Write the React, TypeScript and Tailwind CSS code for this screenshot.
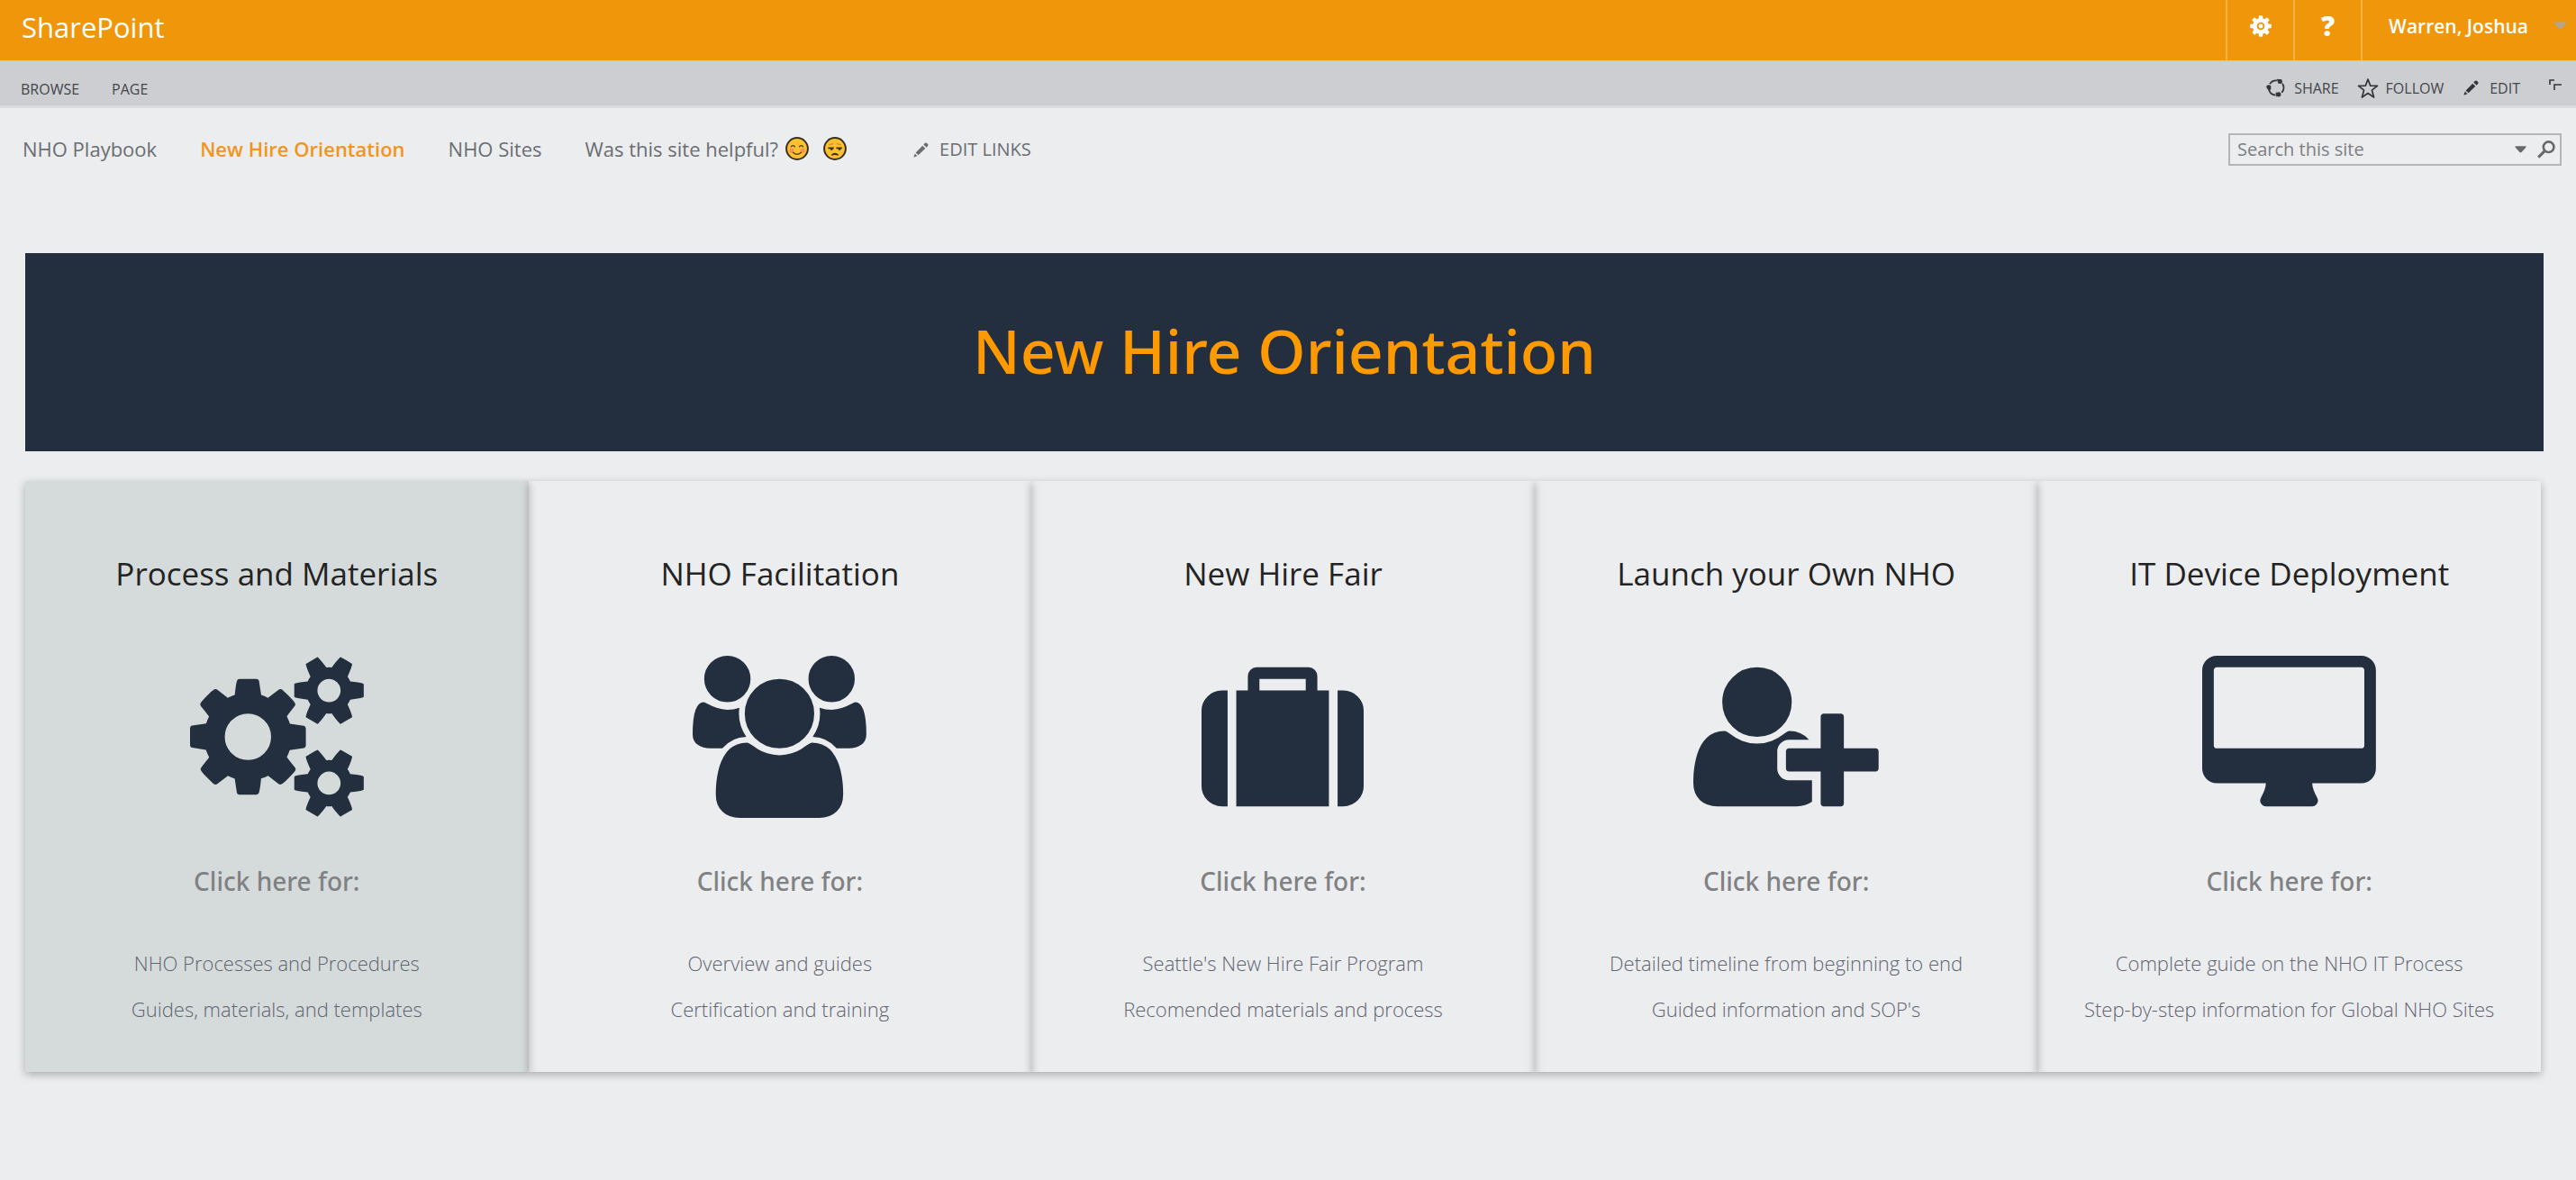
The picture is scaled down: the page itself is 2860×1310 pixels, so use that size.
import React from "react";

type IconProps = { className?: string };

function GearIcon({ className }: IconProps) {
  return (
    <svg viewBox="0 0 24 24" className={className} aria-hidden="true">
      <g fill="currentColor">
        <circle cx="12" cy="12" r="9" />
        {[0, 45, 90, 135, 180, 225, 270, 315].map((a) => (
          <rect key={a} x="9.8" y="0.2" width="4.4" height="6" rx="1" transform={`rotate(${a} 12 12)`} />
        ))}
      </g>
      <circle cx="12" cy="12" r="3.4" fill="none" stroke="#f0960a" strokeWidth="1.9" />
    </svg>
  );
}

function PencilIcon({ className }: IconProps) {
  return (
    <svg viewBox="0 0 20 20" className={className} fill="currentColor" aria-hidden="true">
      <path d="M0.4 19.6 2.1 14.8 5.2 17.9Z" />
      <path d="M3.1 13.4 12 4.3 15.7 8 6.6 16.9Z" />
      <path d="M13.3 2.8 15.2 1Q16.4 0 17.6 1L19 2.4Q20 3.6 19 4.8L17.2 6.7Z" />
    </svg>
  );
}

function ShareIcon({ className }: IconProps) {
  return (
    <svg viewBox="0 0 24 24" className={className} aria-hidden="true">
      <g fill="none" stroke="currentColor" strokeWidth="2">
        <path d="M4.6 7.2A9.4 9.4 0 0 1 13.6 2.7" />
        <path d="M20.6 6.6A9.6 9.6 0 0 1 19.6 18.2" />
        <path d="M3.6 14.6A9.6 9.6 0 0 0 12 21.4" />
      </g>
      <g fill="currentColor">
        <path d="M13.4.8 19.4 1.4 20.2 6.2 15.6 6.6Z" />
        <circle cx="17.6" cy="3.9" r="2.8" />
        <circle cx="3.2" cy="11" r="2.8" />
        <path d="M.4 9.4H6V14L3 15.6Z" />
        <circle cx="16" cy="20.6" r="2.8" />
        <path d="M12 18 17.2 17.8 18.8 21 13 23.4Z" />
      </g>
    </svg>
  );
}

function StarIcon({ className }: IconProps) {
  return (
    <svg viewBox="0 0 24 24" className={className} aria-hidden="true">
      <path
        d="M12 2 14.7 9.1 22.5 9.4 16.4 14.1 18.6 22 12 17.5 5.4 22 7.6 14.1 1.5 9.4 9.3 9.1Z"
        fill="none"
        stroke="currentColor"
        strokeWidth="1.7"
        strokeLinejoin="round"
      />
    </svg>
  );
}

function FocusIcon({ className }: IconProps) {
  return (
    <svg viewBox="0 0 14 13" className={className} fill="none" stroke="currentColor" strokeWidth="1.6" aria-hidden="true">
      <path d="M1 6V1H6" />
      <path d="M6 12V6H14" />
    </svg>
  );
}

function CaretIcon({ className }: IconProps) {
  return (
    <svg viewBox="0 0 14 8" className={className} fill="currentColor" aria-hidden="true">
      <path d="M1.2.4H12.8Q14.2.5 13.2 1.8L8.4 7.2Q7 8.4 5.6 7.2L.8 1.8Q-.2.5 1.2.4Z" />
    </svg>
  );
}

function SearchIcon({ className }: IconProps) {
  return (
    <svg viewBox="0 0 20 20" className={className} fill="none" stroke="currentColor" aria-hidden="true">
      <circle cx="12.6" cy="7.2" r="5.8" strokeWidth="2.6" />
      <path d="M8.2 11.6 1.2 18.6" strokeWidth="3" />
    </svg>
  );
}

function HappyFace() {
  return (
    <svg viewBox="0 0 26 26" className="size-[26px]" aria-hidden="true">
      <circle cx="13" cy="13" r="11.9" fill="#fdc02f" stroke="#3a3020" strokeWidth="2" />
      <circle cx="6.8" cy="15.2" r="2.6" fill="#f9905a" />
      <circle cx="19.2" cy="15.2" r="2.6" fill="#f9905a" />
      <g fill="none" stroke="#5a4315" strokeWidth="1.4" strokeLinecap="round">
        <path d="M6.4 10.8Q8.4 8.4 10.4 10.8" />
        <path d="M15.6 10.8Q17.6 8.4 19.6 10.8" />
        <path d="M8.6 17.2Q13 21.4 17.4 17.2" />
      </g>
    </svg>
  );
}

function UnhappyFace() {
  return (
    <svg viewBox="0 0 26 26" className="size-[26px]" aria-hidden="true">
      <circle cx="13" cy="13" r="11.9" fill="#fdc02f" stroke="#3a3020" strokeWidth="2" />
      <g fill="none" stroke="#d48d1c" strokeWidth="1.2" strokeLinecap="round">
        <path d="M6.6 8.6 10.8 7.6" />
        <path d="M15.2 7.6 19.4 8.6" />
      </g>
      <g fill="#3a3020">
        <path d="M5.4 11.6H11.8V13.2H10.8Q10.6 15 9.2 15 7.8 15 7.8 13.2H5.4Z" />
        <path d="M14.4 11.6H20.8V13.2H19.6Q19.4 15 18 15 16.6 15 16.6 13.2H14.4Z" />
        <path d="M8.8 19.8Q13 15.8 17.2 19.8L16.4 20.8Q13 19.4 9.6 20.8Z" />
      </g>
    </svg>
  );
}

function CogsIcon() {
  return (
    <svg viewBox="0 0 1920 1792" className="h-45" fill="currentColor" aria-hidden="true">
      <path d="M896 896q0-106-75-181t-181-75-181 75-75 181 75 181 181 75 181-75 75-181zm768 512q0-52-38-90t-90-38-90 38-38 90q0 53 37.5 90.5t90.5 37.5 90.5-37.5 37.5-90.5zm0-1024q0-52-38-90t-90-38-90 38-38 90q0 53 37.5 90.5t90.5 37.5 90.5-37.5 37.5-90.5zm-384 421v185q0 10-7 19.5t-16 10.5l-155 24q-11 35-32 76 34 48 90 115 7 11 7 20 0 12-7 19-23 30-82.5 89.5t-78.5 59.5q-11 0-21-7l-115-90q-37 19-77 31-11 108-23 155-7 24-30 24h-186q-11 0-20-7.5t-10-17.5l-23-153q-34-10-75-31l-118 89q-7 7-20 7-11 0-21-8-144-133-144-160 0-9 7-19 10-14 41-53t47-61q-23-44-35-82l-152-24q-10-1-17-9.5t-7-19.5v-185q0-10 7-19.5t16-10.5l155-24q11-35 32-76-34-48-90-115-7-11-7-20 0-12 7-20 22-30 82-89t79-59q11 0 21 7l115 90q34-18 77-32 11-108 23-154 7-24 30-24h186q11 0 20 7.5t10 17.5l23 153q34 10 75 31l118-89q8-7 20-7 11 0 21 8 144 133 144 160 0 8-7 19-12 16-42 54t-45 60q23 48 34 82l152 23q10 2 17 10.5t7 19.5zm640 533v140q0 16-149 31-12 27-30 52 51 113 51 138 0 4-4 7-122 71-124 71-8 0-46-47t-52-68q-20 2-30 2t-30-2q-14 21-52 68t-46 47q-2 0-124-71-4-3-4-7 0-25 51-138-18-25-30-52-149-15-149-31v-140q0-16 149-31 13-29 30-52-51-113-51-138 0-4 4-7 4-2 35-20t59-34 30-16q8 0 46 46.5t52 67.5q20-2 30-2t30 2q51-71 92-112l6-2q4 0 124 70 4 3 4 7 0 25-51 138 17 23 30 52 149 15 149 31zm0-1024v140q0 16-149 31-12 27-30 52 51 113 51 138 0 4-4 7-122 71-124 71-8 0-46-47t-52-68q-20 2-30 2t-30-2q-14 21-52 68t-46 47q-2 0-124-71-4-3-4-7 0-25 51-138-18-25-30-52-149-15-149-31v-140q0-16 149-31 13-29 30-52-51-113-51-138 0-4 4-7 4-2 35-20t59-34 30-16q8 0 46 46.5t52 67.5q20-2 30-2t30 2q51-71 92-112l6-2q4 0 124 70 4 3 4 7 0 25-51 138 17 23 30 52 149 15 149 31z" />
    </svg>
  );
}

function UsersIcon() {
  return (
    <svg viewBox="0 0 1920 1792" className="h-45" fill="currentColor" aria-hidden="true">
      <path d="M593 896q-162 5-265 128h-134q-82 0-138-40.5t-56-118.5q0-353 124-353 6 0 43.5 21t97.5 42.5 119 21.5q67 0 133-23-5 37-5 66 0 139 81 256zm1071 637q0 120-73 189.5t-194 69.5h-874q-121 0-194-69.5t-73-189.5q0-53 3.5-103.5t14-109 26.5-108.5 43-97.5 62-81 85.5-53.5 111.5-20q10 0 43 21.5t73 48 107 48 135 21.5 135-21.5 107-48 73-48 43-21.5q61 0 111.5 20t85.5 53.5 62 81 43 97.5 26.5 108.5 14 109 3.5 103.5zm-1024-1277q0 106-75 181t-181 75-181-75-75-181 75-181 181-75 181 75 75 181zm704 384q0 159-112.5 271.5t-271.5 112.5-271.5-112.5-112.5-271.5 112.5-271.5 271.5-112.5 271.5 112.5 112.5 271.5zm576 225q0 78-56 118.5t-138 40.5h-134q-103-123-265-128 81-117 81-256 0-29-5-66 66 23 133 23 59 0 119-21.5t97.5-42.5 43.5-21q124 0 124 353zm-128-609q0 106-75 181t-181 75-181-75-75-181 75-181 181-75 181 75 75 181z" />
    </svg>
  );
}

function SuitcaseIcon() {
  return (
    <svg viewBox="0 0 1792 1792" className="h-45" fill="currentColor" aria-hidden="true">
      <path d="M640 384h512v-128h-512v128zm-352 0v1280h-64q-92 0-158-66t-66-158v-832q0-92 66-158t158-66h64zm1120 0v1280h-1024v-1280h128v-160q0-40 28-68t68-28h576q40 0 68 28t28 68v160h128zm384 224v832q0 92-66 158t-158 66h-64v-1280h64q92 0 158 66t66 158z" />
    </svg>
  );
}

function UserPlusIcon() {
  return (
    <svg viewBox="0 0 2048 1792" className="h-45" fill="currentColor" aria-hidden="true">
      <path d="M704 896q-159 0-271.5-112.5t-112.5-271.5 112.5-271.5 271.5-112.5 271.5 112.5 112.5 271.5-112.5 271.5-271.5 112.5zm960 128h352q13 0 22.5 9.5t9.5 22.5v192q0 13-9.5 22.5t-22.5 9.5h-352v352q0 13-9.5 22.5t-22.5 9.5h-192q-13 0-22.5-9.5t-9.5-22.5v-352h-352q-13 0-22.5-9.5t-9.5-22.5v-192q0-13 9.5-22.5t22.5-9.5h352v-352q0-13 9.5-22.5t22.5-9.5h192q13 0 22.5 9.5t9.5 22.5v352zm-736 224q0 52 38 90t90 38h256v238q-68 50-171 50h-874q-121 0-194-69t-73-190q0-53 3.5-103.5t14-109 26.5-108.5 43-97.5 62-81 85.5-53.5 111.5-20q19 0 39 17 79 61 154.5 91.5t164.5 30.5 164.5-30.5 154.5-91.5q20-17 39-17 132 0 217 96h-223q-52 0-90 38t-38 90v192z" />
    </svg>
  );
}

function DesktopIcon() {
  return (
    <svg viewBox="-64 0 1920 1792" className="h-45" fill="currentColor" aria-hidden="true">
      <path d="M1728 992v-832q0-13-9.5-22.5t-22.5-9.5h-1600q-13 0-22.5 9.5t-9.5 22.5v832q0 13 9.5 22.5t22.5 9.5h1600q13 0 22.5-9.5t9.5-22.5zm128-832v1088q0 66-47 113t-113 47h-544q0 37 16 77.5t32 71 16 43.5q0 26-19 45t-45 19h-512q-26 0-45-19t-19-45q0-14 16-44t32-70 16-78h-544q-66 0-113-47t-47-113v-1088q0-66 47-113t113-47h1600q66 0 113 47t47 113z" />
    </svg>
  );
}

const cards = [
  { title: "Process and Materials", icon: <CogsIcon />, lines: ["NHO Processes and Procedures", "Guides, materials, and templates"], active: true },
  { title: "NHO Facilitation", icon: <UsersIcon />, lines: ["Overview and guides", "Certification and training"], active: false },
  { title: "New Hire Fair", icon: <SuitcaseIcon />, lines: ["Seattle's New Hire Fair Program", "Recomended materials and process"], active: false },
  { title: "Launch your Own NHO", icon: <UserPlusIcon />, lines: ["Detailed timeline from beginning to end", "Guided information and SOP's"], active: false },
  { title: "IT Device Deployment", icon: <DesktopIcon />, lines: ["Complete guide on the NHO IT Process", "Step-by-step information for Global NHO Sites"], active: false },
];

export default function App() {
  return (
    <div className="min-h-screen bg-[#ecedef] font-['Open_Sans','Noto_Sans',sans-serif]">
      <header>
        <div className="flex h-[67px] items-stretch justify-between bg-[#f0960a] text-white">
          <a href="#" className="flex items-center pb-2 pl-6 text-[31px] leading-9">SharePoint</a>
          <div className="flex items-stretch">
            <button type="button" aria-label="Settings" className="flex w-[75px] items-center justify-center border-l-2 border-[#f6b247] pb-2.5">
              <GearIcon className="size-6" />
            </button>
            <button type="button" aria-label="Help" className="flex w-[75px] items-center justify-center border-l-2 border-[#f6b247] pb-2.5 text-[30px] leading-9 font-extrabold">
              ?
            </button>
            <button type="button" className="flex items-center gap-7 border-l-2 border-[#f6b247] pr-2.5 pb-2.5 pl-[29px] text-[21px] leading-7 font-semibold">
              Warren, Joshua
              <CaretIcon className="w-[15px] text-[#b5a58a]" />
            </button>
          </div>
        </div>

        <div className="flex h-[53px] items-center justify-between border-t border-b-3 border-t-[#d8c9ac] border-b-[#d9dadd] bg-[#cdced2] pt-2.5 pr-4 pl-[23px] text-base leading-6 text-[#444649]">
          <div className="flex gap-9 pt-0.5">
            <button type="button">BROWSE</button>
            <button type="button">PAGE</button>
          </div>
          <div className="flex items-center">
            <button type="button" className="flex items-center gap-2.5">
              <ShareIcon className="size-[21px] text-[#333538]" />SHARE
            </button>
            <button type="button" className="ml-5 flex items-center gap-2">
              <StarIcon className="size-6 text-[#333538]" />FOLLOW
            </button>
            <button type="button" className="ml-[22px] flex items-center gap-3">
              <PencilIcon className="size-[17px] text-[#333538]" />EDIT
            </button>
            <button type="button" aria-label="Focus on content" className="ml-8 pb-1.5">
              <FocusIcon className="w-3.5 text-[#333538]" />
            </button>
          </div>
        </div>

        <div className="flex items-center justify-between pt-7 pr-4 pb-[97px] pl-[25px] text-[22px] leading-[30px] text-[#6a6d72]">
          <nav className="flex items-center pb-0.5">
            <a href="#">NHO Playbook</a>
            <a href="#" aria-current="page" className="ml-12 font-semibold text-[#f2941d]">New Hire Orientation</a>
            <a href="#" className="ml-12">NHO Sites</a>
            <span className="ml-12">Was this site helpful?</span>
            <a href="#" aria-label="Yes, helpful" className="ml-2"><HappyFace /></a>
            <a href="#" aria-label="No, not helpful" className="ml-4"><UnhappyFace /></a>
            <button type="button" className="ml-[74px] flex items-center gap-3 pt-0.5 text-xl">
              <PencilIcon className="size-[17px]" />EDIT LINKS
            </button>
          </nav>
          <form className="flex h-9 w-[370px] items-center border-2 border-[#b4b5b8] pr-[5px] pl-2" onSubmit={(e) => e.preventDefault()}>
            <input type="search" aria-label="Search this site" placeholder="Search this site" className="min-w-0 flex-1 bg-transparent text-xl leading-6 outline-none placeholder:text-[#7c7e82]" />
            <button type="button" aria-label="Search scope" className="mr-3"><CaretIcon className="w-[13px] text-[#66686b]" /></button>
            <button type="submit" aria-label="Search"><SearchIcon className="size-5 text-[#66686b]" /></button>
          </form>
        </div>
      </header>

      <main className="pr-9 pb-16 pl-7">
        <div className="flex h-[220px] items-center justify-center bg-[#232f3e] pb-1">
          <h1 className="font-['Noto_Sans','Open_Sans',sans-serif] text-[68px] leading-[84px] font-medium text-[#ff9900]">New Hire Orientation</h1>
        </div>
        <div className="mt-[33px] mr-[3px] grid grid-cols-5">
          {cards.map((card) => (
            <a
              key={card.title}
              href="#"
              className={
                "flex flex-col items-center pt-20 pb-11 text-center shadow-[0_3px_9px_rgba(0,0,0,0.28)] " +
                (card.active ? "bg-[#d5dbdb]" : "")
              }
            >
              <h2 className="text-[35px] leading-[46px] text-[#232323]">{card.title}</h2>
              <div className="mt-[68px] text-[#232f3e]">{card.icon}</div>
              <p className="mt-[52px] font-['Noto_Sans','Open_Sans',sans-serif] text-[28px] leading-9 font-medium text-[#808183]">Click here for:</p>
              <ul className="mt-12 text-[22px] leading-[51px] font-light text-[#5f6470]">
                {card.lines.map((line) => (
                  <li key={line}>{line}</li>
                ))}
              </ul>
            </a>
          ))}
        </div>
      </main>
    </div>
  );
}
